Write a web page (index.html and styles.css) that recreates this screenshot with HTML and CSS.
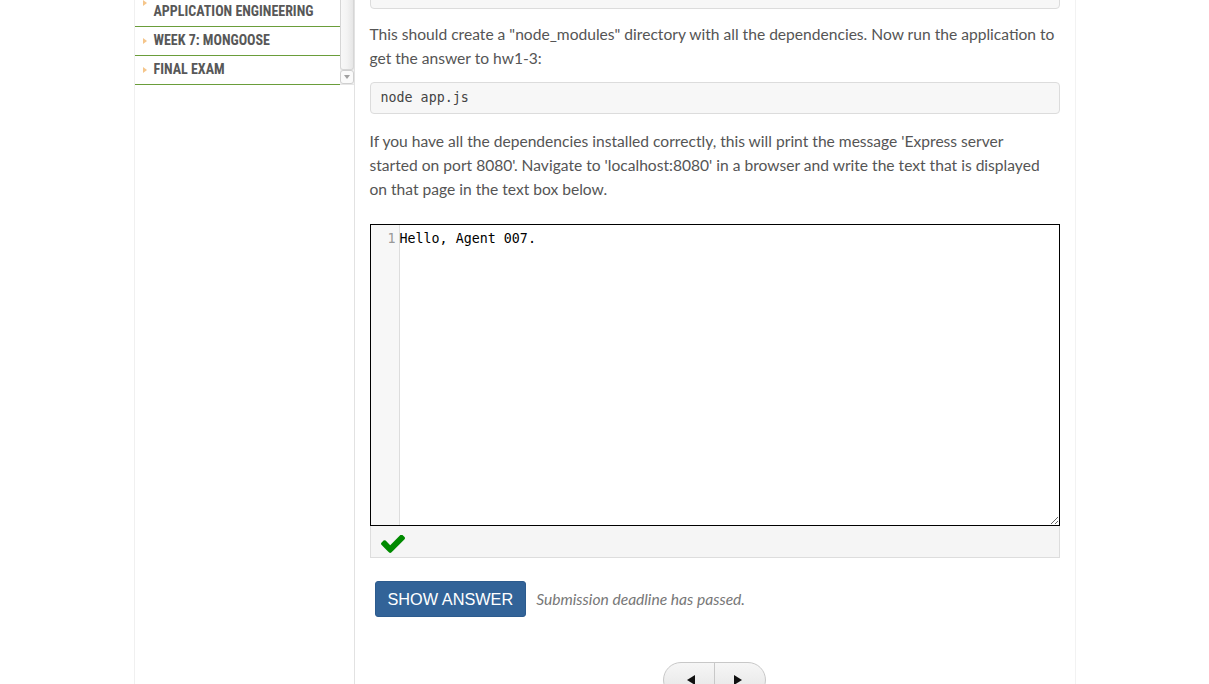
FILE: index.html
```html
<!DOCTYPE html>
<html lang="en">
<head>
<meta charset="utf-8">
<title>Homework 1.3</title>
<link rel="stylesheet" href="styles.css">
</head>
<body>
<div class="page">
  <aside class="sidebar">
    <div class="nav-wrap">
      <ul class="nav">
        <li class="nav-item">Week 5: Indexes</li>
        <li class="nav-item">Week 6: Node.js &amp; Application Engineering</li>
        <li class="nav-item">Week 7: Mongoose</li>
        <li class="nav-item">Final Exam</li>
      </ul>
      <div class="scrollbar">
        <div class="scroll-thumb"></div>
        <div class="scroll-btn"><span class="scroll-arrow"></span></div>
      </div>
    </div>
  </aside>
  <main class="main">
    <pre class="code">npm install</pre>
    <p class="text">This should create a "node_modules" directory with all the dependencies. Now run the application to get the answer to hw1-3:</p>
    <pre class="code">node app.js</pre>
    <p class="text text-2">If you have all the dependencies installed correctly, this will print the message 'Express server<br>started on port 8080'. Navigate to 'localhost:8080' in a browser and write the text that is displayed<br>on that page in the text box below.</p>
    <div class="editor">
      <div class="gutter"><span class="lineno">1</span></div>
      <div class="lines"><div class="line">Hello, Agent 007.</div></div>
    </div>
    <div class="feedback">
      <svg class="check" width="24" height="18" viewBox="121 362 1550 1164" preserveAspectRatio="none" aria-hidden="true"><path d="M1671 566q0 40-28 68l-724 724-136 136q-28 28-68 28t-68-28l-136-136-362-362q-28-28-28-68t28-68l136-136q28-28 68-28t68 28l294 295 656-657q28-28 68-28t68 28l136 136q28 28 28 68z"/></svg>
    </div>
    <div class="actions">
      <button class="btn-answer" type="button">SHOW ANSWER</button>
      <span class="deadline">Submission deadline has passed.</span>
    </div>
    <div class="pager">
      <div class="pager-btn"><span class="tri tri-left"></span></div>
      <div class="pager-btn"><span class="tri tri-right"></span></div>
    </div>
  </main>
</div>
</body>
</html>
```

FILE: styles.css
```css
html, body {
  margin: 0;
  padding: 0;
  background: #fff;
}

body {
  font-family: "Lato", "Open Sans", sans-serif;
  color: #555;
  overflow: hidden;
}

.page {
  width: 942px;
  margin: -49px auto 0;
  display: flex;
  min-height: calc(100vh + 49px);
}

.sidebar {
  width: 219px;
  flex: none;
  border-left: 1px solid #f0f0f0;
  border-right: 1px solid #e2e2e2;
}

.nav-wrap {
  display: flex;
}

.nav {
  list-style: none;
  margin: 0;
  padding: 0;
  width: 205px;
}

.nav-item {
  position: relative;
  padding: 4px 8px 6px 19px;
  font-family: "Roboto Condensed", "Liberation Sans Narrow", "Roboto", sans-serif;
  font-weight: bold;
  font-size: 14px;
  line-height: 18px;
  text-transform: uppercase;
  color: #585858;
  border-bottom: 1px solid #6a9d3a;
}

.nav-item::before {
  content: "";
  position: absolute;
  left: 8px;
  top: 50%;
  margin-top: -3px;
  border-left: 4px solid #f5c58a;
  border-top: 3.5px solid transparent;
  border-bottom: 3.5px solid transparent;
}

.scrollbar {
  width: 14px;
  display: flex;
  flex-direction: column;
  background: #f1f1f1;
  border-bottom: 1px solid #e6e6e6;
}

.scroll-thumb {
  flex: 1;
  background: linear-gradient(90deg, #f8f8f8 0%, #f3f3f3 50%, #e6e6e6 100%);
  border: 1px solid #d6d6d6;
  border-top: none;
  border-radius: 0 0 3px 3px;
}

.scroll-btn {
  height: 14px;
  display: flex;
  align-items: center;
  justify-content: center;
  background: #fafafa;
  border: 1px solid #cfcfcf;
  border-radius: 3px;
  box-sizing: border-box;
}

.scroll-arrow {
  border-top: 4px solid #a0a0a0;
  border-left: 3.5px solid transparent;
  border-right: 3.5px solid transparent;
}

.main {
  width: 690px;
  flex: none;
  padding: 26px 15px 0;
  border-right: 1px solid #f2f2f2;
}

.code {
  margin: 0;
  background: #f7f7f7;
  border: 1px solid #dcdcdc;
  border-radius: 4px;
  padding: 6px 10px;
  font-family: "DejaVu Sans Mono", monospace;
  font-size: 13.33px;
  line-height: 18px;
  color: #444;
}

.text {
  margin: 13px 0 12px;
  font-size: 15.6px;
  line-height: 24px;
  color: #555;
}

.text-2 {
  margin: 15px 0 0;
}

.editor {
  margin-top: 23px;
  height: 300px;
  border: 1px solid #000;
  display: flex;
  resize: both;
  overflow: hidden;
}

.gutter {
  width: 28px;
  flex: none;
  background: #f7f7f7;
  border-right: 1px solid #ddd;
  text-align: right;
  padding-top: 5px;
}

.lineno {
  display: block;
  padding-right: 3px;
  font-family: "DejaVu Sans Mono", monospace;
  font-size: 13.33px;
  line-height: 18px;
  color: #999;
}

.lines {
  flex: 1;
  padding-top: 5px;
}

.line {
  font-family: "DejaVu Sans Mono", monospace;
  font-size: 13.33px;
  line-height: 18px;
  color: #000;
}

.feedback {
  height: 32px;
  box-sizing: border-box;
  background: #f5f5f5;
  border: 1px solid #ddd;
  border-top: none;
  display: flex;
  align-items: flex-start;
  padding: 9px 0 0 10px;
}

.check {
  fill: #008a00;
}

.actions {
  margin-top: 23px;
  display: flex;
  align-items: center;
  gap: 10px;
  padding-left: 5px;
}

.btn-answer {
  height: 36px;
  padding: 0 12px;
  border: 1px solid #2c5b8e;
  border-radius: 3px;
  background: #326398;
  color: #fff;
  font-family: "Liberation Sans", Arial, sans-serif;
  font-size: 16.3px;
}

.deadline {
  font-style: italic;
  font-size: 15.6px;
  color: #777;
}

.pager {
  margin: 45px auto 0;
  width: 103px;
  height: 36px;
  display: flex;
  border: 1px solid #c8c8c8;
  border-radius: 18px;
  overflow: hidden;
  box-sizing: border-box;
  background: linear-gradient(#f6f6f6, #e4e4e4);
}

.pager-btn {
  flex: 1;
  display: flex;
  align-items: center;
  justify-content: center;
}

.pager-btn + .pager-btn {
  border-left: 1px solid #c8c8c8;
}

.tri {
  border-top: 5px solid transparent;
  border-bottom: 5px solid transparent;
}

.tri-left {
  border-right: 8px solid #111;
  margin-left: 4px;
}

.tri-right {
  border-left: 8px solid #111;
  margin-right: 4px;
}
```
